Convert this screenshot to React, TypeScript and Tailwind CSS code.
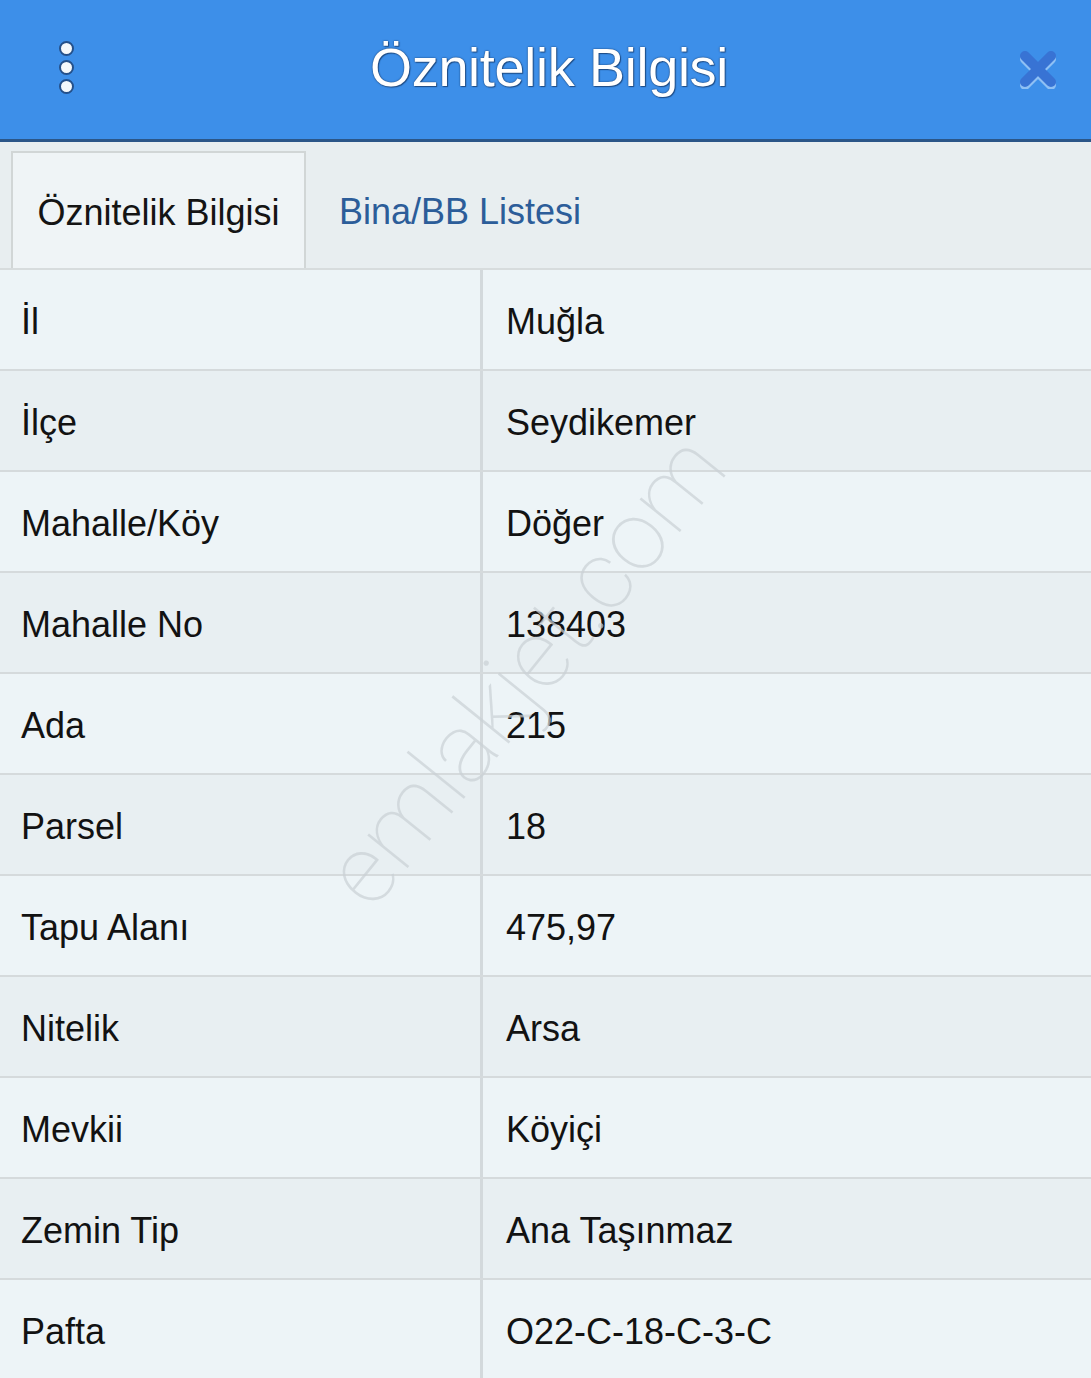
const rows: [string, string][] = [
  ['İl', 'Muğla'],
  ['İlçe', 'Seydikemer'],
  ['Mahalle/Köy', 'Döğer'],
  ['Mahalle No', '138403'],
  ['Ada', '215'],
  ['Parsel', '18'],
  ['Tapu Alanı', '475,97'],
  ['Nitelik', 'Arsa'],
  ['Mevkii', 'Köyiçi'],
  ['Zemin Tip', 'Ana Taşınmaz'],
  ['Pafta', 'O22-C-18-C-3-C'],
]

function MenuDots() {
  return (
    <div className="mb-[4px] flex flex-col items-center gap-[4px]">
      <span className="block h-[15px] w-[15px] rounded-full border-2 border-[#24508a] bg-[#f4f8fb]" />
      <span className="block h-[15px] w-[15px] rounded-full border-2 border-[#24508a] bg-[#f4f8fb]" />
      <span className="block h-[15px] w-[15px] rounded-full border-2 border-[#24508a] bg-[#f4f8fb]" />
    </div>
  )
}

function CloseIcon() {
  return (
    <svg width="40" height="40" viewBox="0 0 40 40" className="mb-[2px]">
      <g strokeLinecap="round" strokeWidth="10" fill="none">
        <path d="M7 10 L33 36 M33 10 L7 36" stroke="#8fc0f4" />
        <path d="M7 7 L33 33 M33 7 L7 33" stroke="#3873d4" />
      </g>
    </svg>
  )
}

export default function App() {
  return (
    <div className="relative w-[1091px] h-[1378px] overflow-hidden bg-[#edf4f7] font-['Liberation_Sans',Arial,sans-serif]">
      {/* Header */}
      <header className="flex h-[142px] items-center justify-between border-b-[3px] border-[#2b5688] bg-[#3d8fe9] pl-[59px] pr-[33px]">
        <MenuDots />
        <h1 className="mb-[6px] ml-[6px] text-[54px] leading-none text-white tracking-[-0.3px] [text-shadow:0_0_2px_#1f4d86,0_0_1px_#1f4d86,1px_1px_1px_#1f4d86]">
          Öznitelik Bilgisi
        </h1>
        <CloseIcon />
      </header>

      {/* Tabs */}
      <div className="flex h-[128px] items-end border-b-2 border-[#d7dcdd] bg-[#e8eef0] pl-[11px]">
        <div className="flex h-[117px] w-[295px] items-center justify-center border-2 border-b-0 border-[#d1d6d6] bg-[#eff4f6] pt-[4px] text-[36px] text-[#141414]">
          Öznitelik Bilgisi
        </div>
        <div className="flex h-[117px] items-center pl-[33px] pt-[4px] text-[36px] text-[#2c5d99]">
          Bina/BB Listesi
        </div>
      </div>

      {/* Attribute table */}
      <div className="flex flex-col">
        {rows.map(([label, value], i) => (
          <div
            key={label}
            className={`flex h-[101px] shrink-0 border-b-2 border-[#d5dadc] text-[36px] text-[#121212] ${
              i % 2 === 0 ? 'bg-[#edf4f7]' : 'bg-[#e8eff2]'
            }`}
          >
            <div className="flex w-[483px] items-center border-r-[3px] border-[#d3d9dc] pl-[21px] pt-[4px]">{label}</div>
            <div className="flex flex-1 items-center pl-[23px] pt-[4px]">{value}</div>
          </div>
        ))}
      </div>

      {/* Watermark */}
      <div className="pointer-events-none absolute left-[525px] top-[670px] -translate-x-1/2 -translate-y-1/2 -rotate-[51deg] whitespace-nowrap font-['Roboto',sans-serif] text-[98px] font-thin text-[#c9d0d4]/70">
        emlakjet.com
      </div>
    </div>
  )
}
